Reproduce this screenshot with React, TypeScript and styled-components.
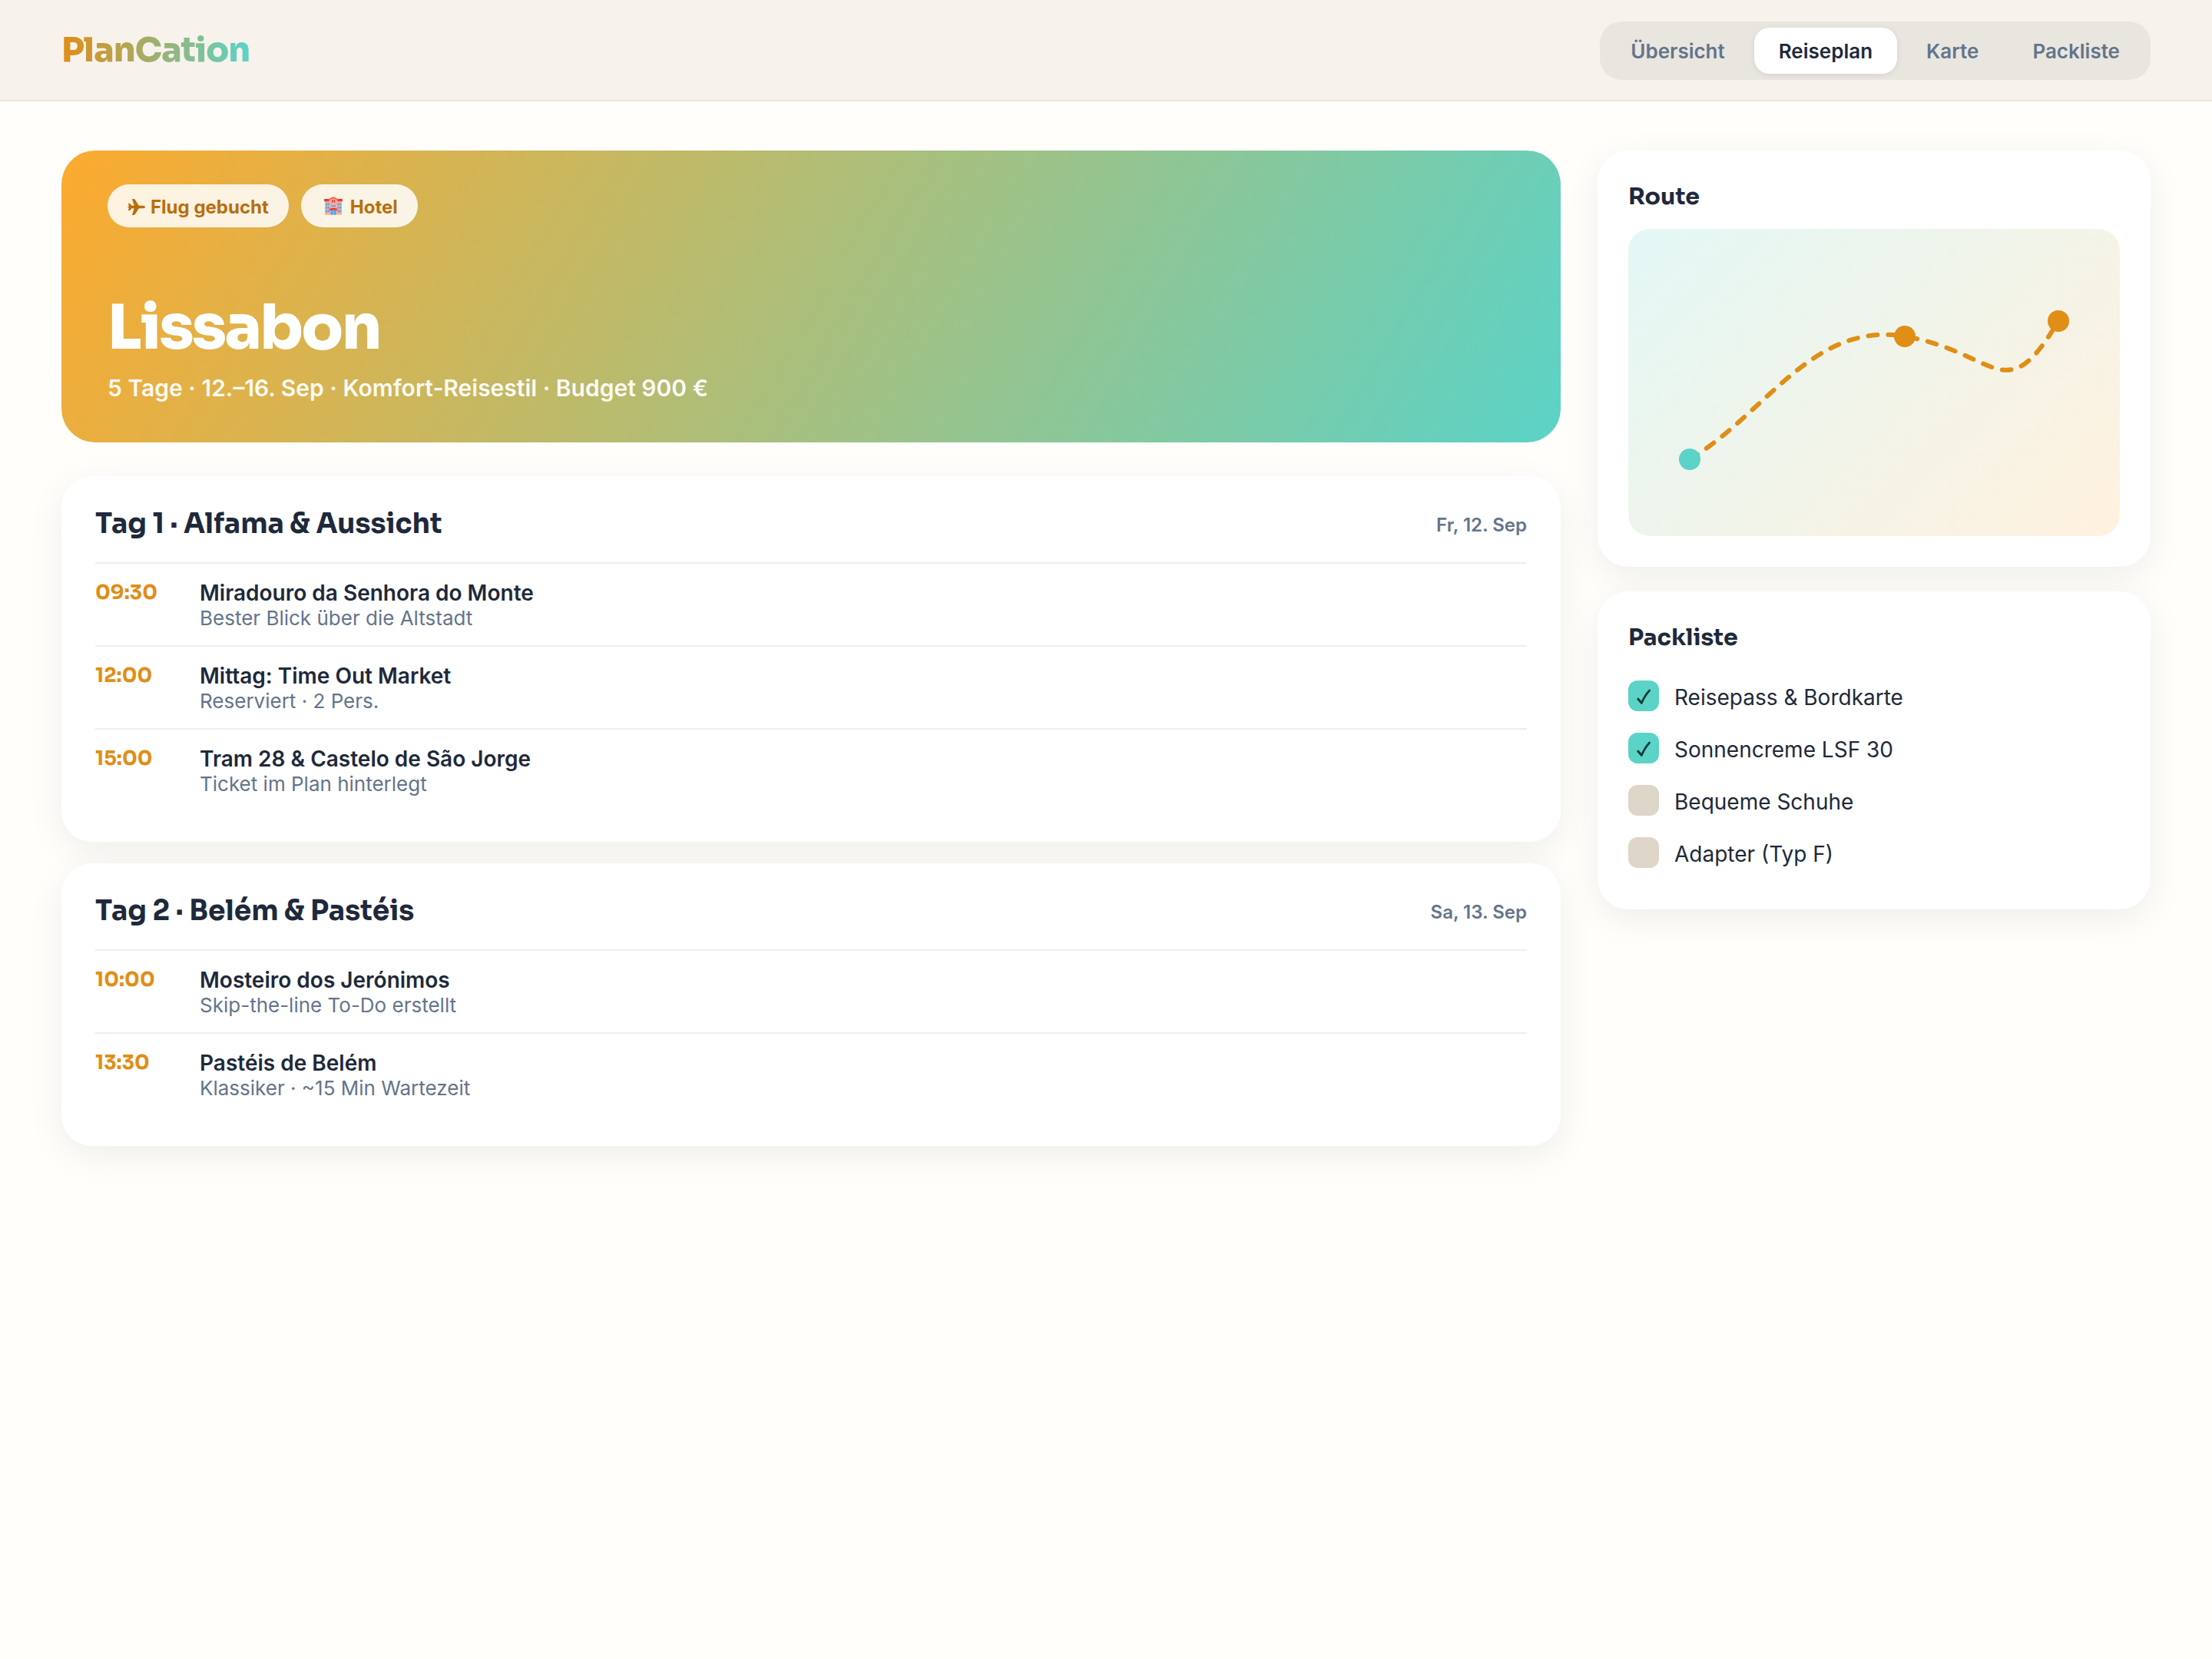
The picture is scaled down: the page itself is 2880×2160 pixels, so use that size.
import React from "react";
import styled, { createGlobalStyle } from "styled-components";

const display = `"Sora", "Inter", "Liberation Sans", sans-serif`;

const GlobalStyle = createGlobalStyle`
  * { box-sizing: border-box; }
  body { margin: 0; background: #fffefb; color: #1e293b; font-family: "Inter", "Liberation Sans", sans-serif; -webkit-font-smoothing: antialiased; }
  #root { min-height: 2160px; }
  h1, h2, h3, p, ul { margin: 0; padding: 0; }
`;

const Header = styled.header`
  display: flex; align-items: center; justify-content: space-between;
  height: 132px; padding: 0 80px; background: #f7f2ec; border-bottom: 2px solid #e9e6e0;
`;
const Logo = styled.div`
  font-family: ${display}; font-weight: 800; font-size: 44px; line-height: 56px; letter-spacing: -0.88px;
  background: linear-gradient(90deg, #e08e16, #5bd3c7); background-clip: text; -webkit-background-clip: text; color: transparent;
`;
const Nav = styled.nav`
  display: flex; gap: 6px; height: 76px; margin-top: 2px; padding: 8px; border-radius: 28px; background: #e9e6df;
`;
const Tab = styled.button<{ $active?: boolean }>`
  border: 0; border-radius: 20px; padding: 1px 32px 0; height: 60px;
  font: 600 26px/32px "Inter", sans-serif;
  color: ${(p) => (p.$active ? "#1e293b" : "#64748b")};
  background: ${(p) => (p.$active ? "#fff" : "transparent")};
  box-shadow: ${(p) => (p.$active ? "0 2px 8px rgba(0,0,0,.08)" : "none")};
`;
const Main = styled.main`
  display: grid; grid-template-columns: 1952px 720px; gap: 48px; padding: 64px 80px; align-items: start;
`;
const Column = styled.div<{ $gap: number }>`
  display: flex; flex-direction: column; gap: ${(p) => p.$gap}px;
`;
const Hero = styled.section`
  display: flex; flex-direction: column; justify-content: space-between; height: 380px; margin-bottom: 16px;
  padding: 44px 60px 53px; border-radius: 44px; color: #fff;
  background: linear-gradient(120deg, #fcaa2e, #5bd3c7);
`;
const Chips = styled.div`display: flex; gap: 16px;`;
const Chip = styled.span`
  display: flex; align-items: center; gap: 7px; height: 56px; padding: 2px 26px 0; border-radius: 28px;
  background: rgba(255,255,255,.85); color: #b86e0e; font-weight: 700; font-size: 24px;
`;
const PlaneSvg = styled.svg`width: 23px; height: 21px;`;
const HotelSvg = styled.svg`width: 24px; height: 24px; margin: -2px 3px 0 4px;`;
const HeroTitle = styled.h1`
  font-family: ${display}; font-weight: 800; font-size: 80px; line-height: 88px; letter-spacing: -2.4px;
`;
const HeroMeta = styled.p`
  margin-top: 16px; font-size: 30px; line-height: 36px; font-weight: 600; color: rgba(255,255,255,.95);
`;
const Card = styled.section<{ $pad: string }>`
  padding: ${(p) => p.$pad}; border-radius: 40px; background: #fff; box-shadow: 0 12px 48px rgba(20,20,22,.065);
`;
const DayHead = styled.div`
  display: flex; align-items: flex-start; justify-content: space-between; height: 72px;
`;
const DayTitle = styled.h2`
  font-family: ${display}; font-size: 36px; line-height: 44px; font-weight: 700;
`;
const DayDate = styled.span`padding-top: 9px; font-size: 24px; line-height: 30px; font-weight: 600; color: #64748b;`;
const Stop = styled.div`
  display: flex; height: 108px; padding-top: 22px; border-top: 2px solid #f1ede8;
`;
const Time = styled.span`
  width: 136px; font-family: ${display}; font-size: 26px; line-height: 32px; font-weight: 700; color: #e08e16;
`;
const StopName = styled.div`font-size: 28px; line-height: 33px; font-weight: 600;`;
const StopNote = styled.div`font-size: 26px; line-height: 32px; color: #64748b;`;
const SideTitle = styled.h3`
  padding-top: 2px; font-family: ${display}; font-size: 30px; line-height: 36px; font-weight: 700;
`;
const RouteMap = styled.div`
  height: 400px; margin-top: 24px; border-radius: 28px; background: linear-gradient(135deg, #e3f7f5, #fff1de);
  svg { display: block; width: 100%; height: 100%; }
`;
const PackList = styled.ul`
  display: flex; flex-direction: column; margin-top: 24px; list-style: none;
`;
const PackItem = styled.li`
  display: flex; align-items: center; gap: 20px; height: 68px; font-size: 28px; line-height: 34px;
`;
const PackLabel = styled.span`padding-top: 3px;`;
const Check = styled.span<{ $done: boolean }>`
  width: 40px; height: 40px; border-radius: 12px;
  background: ${(p) => (p.$done ? "#5bd3c7" : "#ddd6c9")};
  svg { display: block; width: 40px; height: 40px; }
`;

const PlaneIcon = () => (
  <PlaneSvg viewBox="0 0 67 62" fill="currentColor">
    <path d="M67 31C67 34 63 35.500 58 35.500H43L28 59Q26 62 22 62H18L26 35.500H16L8 44H3L6 33.500 0 31 6 28.500 3 18H8L16 26.500H26L18 0H22Q26 0 28 3L43 26.500H58C63 26.500 67 28 67 31Z" stroke="currentColor" strokeWidth="1.500" />
  </PlaneSvg>
);

const windowsAt = [
  [6, 25], [14, 25], [6, 38], [14, 38], [6, 51], [14, 51],
  [51, 25], [59, 25], [51, 38], [59, 38], [51, 51], [59, 51],
  [28, 32], [37, 32],
];

const HotelIcon = () => (
  <HotelSvg viewBox="0 0 70 70">
    <rect x="3" y="14" width="64" height="55" fill="#ffab98" />
    <path d="M17 24V12Q35-10 53 12V24Z" fill="#ffab98" />
    <path d="M17 12Q35-9 53 12L50 14Q35-1 20 14Z" fill="#e8605a" />
    <rect x="0" y="9" width="19" height="9" rx="2" fill="#e03c3c" />
    <rect x="51" y="9" width="19" height="9" rx="2" fill="#e03c3c" />
    <path d="M31 11V23M40 11V23M31 17H40" stroke="#dc3545" strokeWidth="3" />
    {windowsAt.map(([x, y]) => (
      <rect key={`${x}-${y}`} x={x} y={y} width="6" height="8" fill="#4aa6f2" />
    ))}
    <rect x="25" y="52" width="20" height="17" fill="#3fa9f5" />
    <path d="M35 52V69" stroke="#ffd7cc" strokeWidth="2" />
    <path d="M19 52Q20 44 28 44H42Q50 44 51 52Z" fill="#e03c3c" />
  </HotelSvg>
);

const days = [
  {
    title: "Tag 1 · Alfama & Aussicht", date: "Fr, 12. Sep",
    stops: [
      ["09:30", "Miradouro da Senhora do Monte", "Bester Blick über die Altstadt"],
      ["12:00", "Mittag: Time Out Market", "Reserviert · 2 Pers."],
      ["15:00", "Tram 28 & Castelo de São Jorge", "Ticket im Plan hinterlegt"],
    ],
  },
  {
    title: "Tag 2 · Belém & Pastéis", date: "Sa, 13. Sep",
    stops: [
      ["10:00", "Mosteiro dos Jerónimos", "Skip-the-line To-Do erstellt"],
      ["13:30", "Pastéis de Belém", "Klassiker · ~15 Min Wartezeit"],
    ],
  },
];

const packing: [string, boolean][] = [
  ["Reisepass & Bordkarte", true],
  ["Sonnencreme LSF 30", true],
  ["Bequeme Schuhe", false],
  ["Adapter (Typ F)", false],
];

export default function App() {
  return (
    <>
      <GlobalStyle />
      <Header>
        <Logo>PlanCation</Logo>
        <Nav>
          {["Übersicht", "Reiseplan", "Karte", "Packliste"].map((t) => (
            <Tab key={t} $active={t === "Reiseplan"}>{t}</Tab>
          ))}
        </Nav>
      </Header>
      <Main>
        <Column $gap={28}>
          <Hero>
            <Chips>
              <Chip><PlaneIcon />Flug gebucht</Chip>
              <Chip><HotelIcon />Hotel</Chip>
            </Chips>
            <div>
              <HeroTitle>Lissabon</HeroTitle>
              <HeroMeta>5 Tage · 12.–16. Sep · Komfort-Reisestil · Budget 900 €</HeroMeta>
            </div>
          </Hero>
          {days.map((d) => (
            <Card key={d.title} $pad="40px 44px">
              <DayHead>
                <DayTitle>{d.title}</DayTitle>
                <DayDate>{d.date}</DayDate>
              </DayHead>
              {d.stops.map(([time, name, note]) => (
                <Stop key={time}>
                  <Time>{time}</Time>
                  <div>
                    <StopName>{name}</StopName>
                    <StopNote>{note}</StopNote>
                  </div>
                </Stop>
              ))}
            </Card>
          ))}
        </Column>
        <Column $gap={32}>
          <Card $pad="40px">
            <SideTitle>Route</SideTitle>
            <RouteMap>
              <svg viewBox="0 0 320 200" preserveAspectRatio="none">
                <path d="M40 150 C90 120 120 60 180 70 S245 119 280 60" fill="none" stroke="#e08e16" strokeWidth="3" strokeDasharray="6 7" strokeLinecap="round" />
                <circle cx="40" cy="150" r="7" fill="#5bd3c7" />
                <circle cx="180" cy="70" r="7" fill="#e08e16" />
                <circle cx="280" cy="60" r="7" fill="#e08e16" />
              </svg>
            </RouteMap>
          </Card>
          <Card $pad="40px">
            <SideTitle>Packliste</SideTitle>
            <PackList>
              {packing.map(([label, done]) => (
                <PackItem key={label}>
                  <Check $done={done}>
                    {done && (
                      <svg viewBox="0 0 40 40" fill="none" stroke="#0f3d39" strokeLinecap="round" strokeLinejoin="round">
                        <path d="M12.800 24.200L17.300 29.200" strokeWidth="3" />
                        <path d="M17.500 29Q21.500 19.500 27.600 13" strokeWidth="2.600" />
                      </svg>
                    )}
                  </Check>
                  <PackLabel>{label}</PackLabel>
                </PackItem>
              ))}
            </PackList>
          </Card>
        </Column>
      </Main>
    </>
  );
}
